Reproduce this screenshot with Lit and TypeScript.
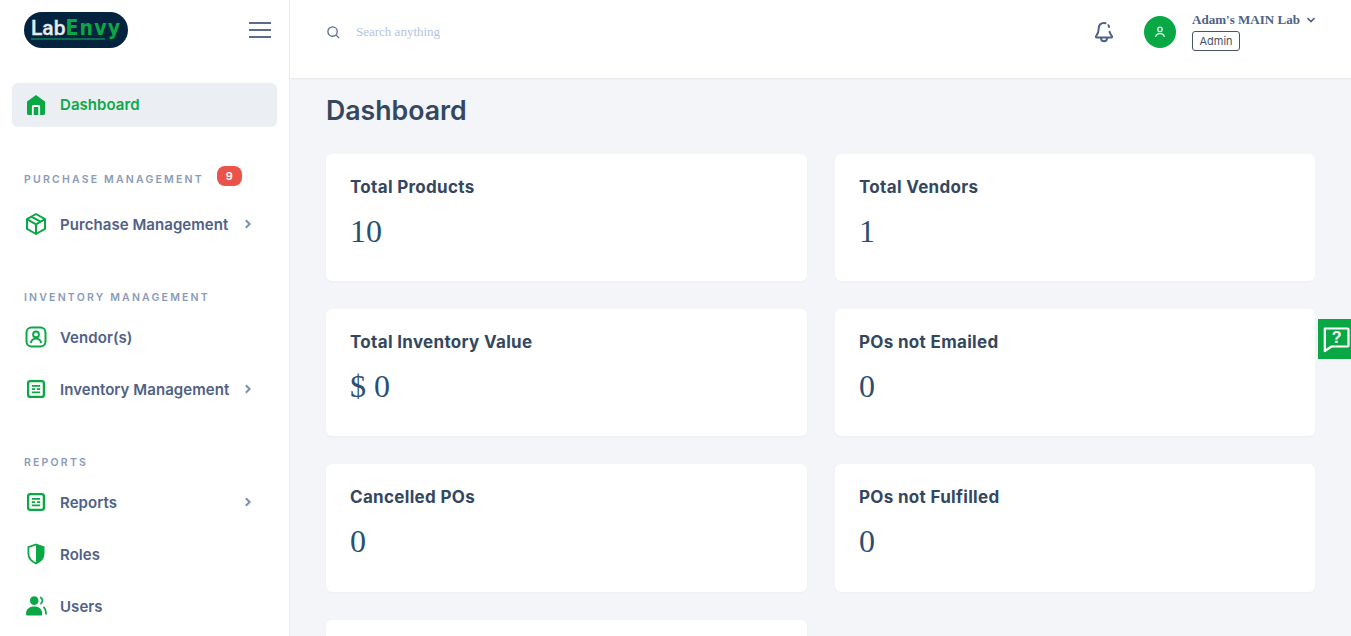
import { LitElement, html, css, svg } from "lit";
import { customElement } from "lit/decorators.js";

const ic = (c: unknown) => html`<svg class="ic" viewBox="0 0 24 24" width="24" height="24">${c}</svg>`;
const listIcon = ic(svg`<rect x="4.1" y="4.1" width="15.8" height="15.800" rx="2.2" fill="none" stroke="#0aa845" stroke-width="2.300"/><path d="M7.800 8.800h8.400M7.800 12.100h3.200M13 12.100h3.200M7.800 15.400h8.400" stroke="#0aa845" stroke-width="1.700" fill="none"/>`);
const boxIcon = ic(svg`<path d="M12 2l9 5.100v9.800l-9 5.100-9-5.100V7.100z M3 7.100l9 5.200 9-5.200 M12 12.300V22 M7.300 4.700l9.200 5" fill="none" stroke="#0aa845" stroke-width="2" stroke-linejoin="round"/>`);
const vendorIcon = ic(svg`<rect x="2.500" y="2.500" width="19" height="19" rx="5" fill="none" stroke="#0aa845" stroke-width="2"/><circle cx="12" cy="9.400" r="2.900" fill="none" stroke="#0aa845" stroke-width="1.900"/><path d="M6.800 18c.6-3 2.600-4.400 5.200-4.400s4.600 1.400 5.200 4.400" fill="none" stroke="#0aa845" stroke-width="1.900"/>`);
const shieldIcon = ic(svg`<path d="M12 2.500l7.600 2.600v6.500c0 4.600-3.200 8-7.600 9.900-4.400-1.900-7.600-5.300-7.600-9.900V5.100z" fill="none" stroke="#0aa845" stroke-width="1.800"/><path d="M12 2.500l7.600 2.600v6.500c0 4.600-3.200 8-7.600 9.900z" fill="#0aa845"/>`);
const usersIcon = ic(svg`<circle cx="10.200" cy="6.600" r="4.300" fill="#0aa845"/><path d="M2 20c0-5 3.200-7.600 8.200-7.600s8 2.600 8 7.600c0 1-.6 1.500-1.600 1.500H3.600C2.600 21.500 2 21 2 20z" fill="#0aa845"/><path d="M16 3.200c1.800.7 2.400 2 2.400 3.400s-.6 2.700-2 3.400M19.400 13c1.800 1.200 2.600 3.600 2.600 7.600" fill="none" stroke="#0aa845" stroke-width="1.700"/>`);
const homeIcon = ic(svg`<path d="M12 2l8.600 6.200c.3.200.4.500.4.800v11.600c0 .8-.6 1.400-1.400 1.400H4.400c-.8 0-1.400-.6-1.400-1.400V9c0-.3.100-.6.400-.8z" fill="#0aa845"/><path d="M8.800 22v-8.200c0-.5.300-.8.800-.8h4.800c.5 0 .8.300.8.800V22" fill="none" stroke="#fff" stroke-width="1.800"/>`);
const chev = html`<svg class="chev" viewBox="0 0 10 10" width="10" height="10"><path d="M2.800 1.200L6.600 5 2.800 8.800" fill="none" stroke="#7d8fb0" stroke-width="2"/></svg>`;

const cards: [string, string][] = [
  ["Total Products", "10"], ["Total Vendors", "1"],
  ["Total Inventory Value", "$ 0"], ["POs not Emailed", "0"],
  ["Cancelled POs", "0"], ["POs not Fulfilled", "0"],
  ["", ""],
];

@customElement("app-root")
export class AppRoot extends LitElement {
  static styles = css`
    :host { display: block; height: 636px; overflow: hidden; position: relative; background: #f4f5f9; }
    .app { display: grid; grid-template-columns: 290px 1fr; height: 636px; overflow: hidden; }
    .side { background: #fff; border-right: 1px solid #e9ebf1; box-sizing: border-box; padding: 0 12px; font-family: "Inter", sans-serif; height: 636px; overflow: hidden; }
    .brand { height: 83px; display: flex; justify-content: space-between; align-items: flex-start; padding: 12px 0 0 12px; box-sizing: border-box; }
    .logo { width: 104px; height: 36px; border-radius: 18px; background: #03233f; box-sizing: border-box; padding: 6px 0 0 7px; font-family: "Roboto", sans-serif; line-height: 20px; font-size: 21px; }
    .logo .w { color: #e6ebee; font-weight: 500; -webkit-text-stroke: 0.3px #e6ebee; }
    .logo .g { color: #0aa845; font-family: "DejaVu Sans", sans-serif; font-stretch: condensed; font-weight: 700; font-size: 21px; letter-spacing: 1.2px; }
    .logo .u { width: 74px; height: 2px; background: #0b6a4e; }
    .burger { margin: 10px 6px 0 0; width: 22px; display: flex; flex-direction: column; gap: 5px; }
    .burger i { display: block; height: 2px; background: #5a6b8c; }
    .item { display: flex; align-items: center; height: 52px; padding-left: 12px; color: #4f6186; font-size: 15px; font-weight: 600; letter-spacing: 0.06px; }
    .item .ic { margin-right: 12px; flex: none; }
    .item .chev { margin-left: auto; margin-right: 24px; }
    .item.active { height: 44px; background: #ebeef3; border-radius: 6px; color: #0aa845; margin-bottom: 1px; box-sizing: border-box; padding-bottom: 1px; }
    .section { margin-top: 36px; }
    .label { height: 20px; margin: 0 0 5px 12px; padding-top: 2px; box-sizing: border-box; display: flex; align-items: center; color: #8a9bb7; font-size: 10.5px; font-weight: 600; letter-spacing: 2.2px; }
    .label.first { height: 30px; }
    .badge { margin-left: 13px; width: 25px; height: 20px; border-radius: 8px; background: #e9534a; color: #fff; font-size: 11px; font-weight: 600; letter-spacing: 0; display: flex; align-items: center; justify-content: center; position: relative; top: -3px; }
    .right { min-width: 0; height: 636px; overflow: hidden; }
    .top { height: 78px; box-sizing: border-box; background: #fff; box-shadow: 0 1px 2px #e3e6ee; display: flex; align-items: center; padding: 0 35px 14px 36px; position: relative; }
    .search { display: flex; align-items: center; gap: 15px; font-family: "Liberation Serif", serif; font-size: 13px; color: #b2c3e4; }
    .search svg { display: block; }
    .bell { margin-left: auto; display: block; }
    .avatar { width: 32px; height: 32px; border-radius: 50%; background: #0aa845; margin-left: 28px; display: flex; align-items: center; justify-content: center; }
    .who { margin: 0 0 0 16px; display: flex; flex-direction: column; gap: 3px; align-items: flex-start; align-self: flex-start; padding-top: 12px; }
    .name { font-family: "Liberation Serif", serif; font-weight: 700; font-size: 13.05px; color: #4f6186; display: flex; align-items: center; gap: 6px; line-height: 16px; }
    .role { font-family: "Inter", sans-serif; font-size: 11px; color: #4a5468; border: 1px solid #4a5468; border-radius: 3px; height: 20px; box-sizing: border-box; line-height: 18px; padding: 0 6.500px; }
    .content { padding: 0 36px; }
    h1 { margin: 0; font-family: "Inter", sans-serif; font-weight: 600; font-size: 26.7px; color: #34475f; height: 75.700px; line-height: 64px; }
    .grid { display: grid; grid-template-columns: 481px 480px; column-gap: 28px; row-gap: 28px; }
    .card { background: #fff; border-radius: 6px; height: 127.330px; padding: 22px 24px; box-sizing: border-box; box-shadow: 0 1px 2px #eceef3; }
    .card h3 { margin: 0; font-family: "Inter", sans-serif; font-weight: 700; font-size: 17px; letter-spacing: 0.32px; color: #34475f; line-height: 22px; }
    .card p { margin: 14px 0 0; font-family: "Liberation Serif", serif; font-size: 32px; line-height: 38px; color: #2a4f72; }
    .help { position: absolute; right: 0; top: 319px; width: 33px; height: 40px; background: #0aa845; display: flex; align-items: center; justify-content: center; }
    .help svg { margin: 0 0 0 4px; }
  `;

  render() {
    return html`<div class="app">
      <aside class="side">
        <div class="brand">
          <div class="logo"><div><span class="w">Lab</span><span class="g">Envy</span></div><div class="u"></div></div>
          <div class="burger"><i></i><i></i><i></i></div>
        </div>
        <div class="item active">${homeIcon}Dashboard</div>
        <div class="section">
          <div class="label first">PURCHASE MANAGEMENT<span class="badge">9</span></div>
          <div class="item">${boxIcon}Purchase Management${chev}</div>
        </div>
        <div class="section">
          <div class="label">INVENTORY MANAGEMENT</div>
          <div class="item">${vendorIcon}Vendor(s)</div>
          <div class="item">${listIcon}Inventory Management${chev}</div>
        </div>
        <div class="section">
          <div class="label">REPORTS</div>
          <div class="item">${listIcon}Reports${chev}</div>
          <div class="item">${shieldIcon}Roles</div>
          <div class="item">${usersIcon}Users</div>
        </div>
      </aside>
      <div class="right">
        <header class="top">
          <div class="search">
            <svg viewBox="0 0 16 16" width="15" height="15"><circle cx="7" cy="7" r="5" fill="none" stroke="#5a6b8c" stroke-width="1.400"/><path d="M10.800 10.800l3.200 3.200" stroke="#5a6b8c" stroke-width="1.400"/></svg>
            <span>Search anything</span>
          </div>
          <svg class="bell" viewBox="0 0 24 24" width="24" height="24"><path d="M13.500 3.200c-.5-.2-1-.2-1.500-.2-3.400 0-5.300 2.500-5.300 5.800 0 3.800-1 5.600-2.600 7.400-.4.500-.1 1.200.5 1.200h14.800c.6 0 .9-.7.500-1.200-1.200-1.400-1.900-2.600-2.300-4.400M16.400 5.200c.3.500.6 1.100.7 1.700" fill="none" stroke="#4f6186" stroke-width="2" stroke-linecap="round"/><path d="M9 18c0 2 1.300 3.200 3 3.200s3-1.200 3-3.200" fill="none" stroke="#4f6186" stroke-width="2" stroke-linecap="round"/></svg>
          <div class="avatar"><svg viewBox="0 0 16 16" width="14" height="14"><circle cx="8" cy="5" r="2.500" fill="none" stroke="#dff5e6" stroke-width="1.500"/><path d="M3 13.500c.4-2.600 2.400-3.700 5-3.700s4.600 1.100 5 3.700" fill="none" stroke="#dff5e6" stroke-width="1.500"/></svg></div>
          <div class="who">
            <div class="name">Adam's MAIN Lab <svg viewBox="0 0 10 10" width="10" height="10"><path d="M1.500 3l3.500 3.500L8.500 3" fill="none" stroke="#4f6186" stroke-width="1.700"/></svg></div>
            <div class="role">Admin</div>
          </div>
        </header>
        <main class="content">
          <h1>Dashboard</h1>
          <div class="grid">
            ${cards.map(([t, v]) => html`<div class="card"><h3>${t}</h3><p>${v}</p></div>`)}
          </div>
        </main>
      </div>
      </div>
      <div class="help"><svg viewBox="0 0 28 28" width="28" height="28"><path d="M1.800 3.500h22.700c.6 0 1 .4 1 1v16c0 .6-.4 1-1 1H8.500l-6.700 4.500z" fill="none" stroke="#fff" stroke-width="2.200" stroke-linejoin="round"/><text x="13.700" y="18" text-anchor="middle" font-family="Liberation Sans, sans-serif" font-weight="700" font-size="16" fill="#fff">?</text></svg></div>`;
  }
}
